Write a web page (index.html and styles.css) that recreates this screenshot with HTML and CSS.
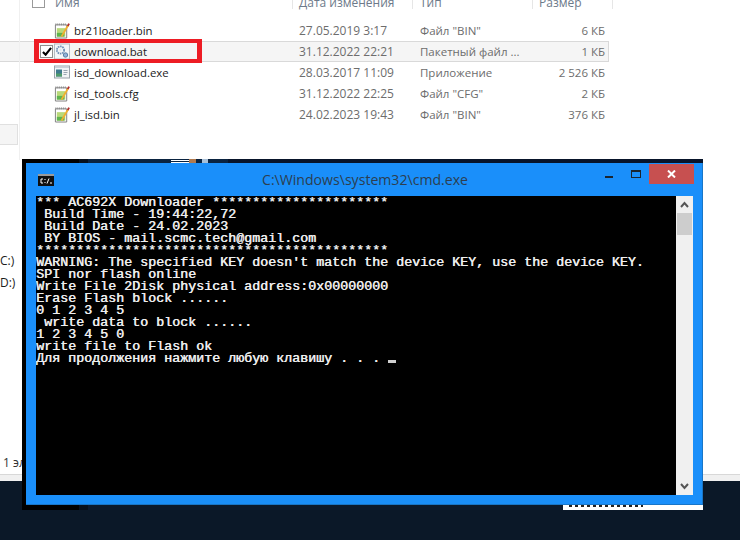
FILE: index.html
```html
<!DOCTYPE html>
<html lang="ru">
<head>
<meta charset="utf-8">
<title>cmd.exe</title>
<link rel="stylesheet" href="styles.css">
</head>
<body>
<svg class="defs" width="0" height="0" aria-hidden="true">
  <symbol id="ico-file" viewBox="0 0 17 17">
    <path d="M1.5 2.5h12v14h-12z" fill="#fff" stroke="#7d7d7d"/>
    <path d="M2 1v2M4 1v2M6 1v2M8 1v2M10 1v2M12 1v2" stroke="#8a8a8a"/>
    <rect x="3" y="6" width="9" height="9" fill="#b9d97a"/>
    <rect x="3" y="11" width="8" height="4" fill="#5fb34f"/>
    <path d="M8 15L15 3" stroke="#f0b030" stroke-width="2"/>
    <path d="M14.6 3.7L16 1.2" stroke="#b03030" stroke-width="2"/>
  </symbol>
  <symbol id="ico-bat" viewBox="0 0 16 16">
    <rect x=".5" y=".5" width="15" height="15" fill="#f4f6f8" stroke="#b4bcc4"/>
    <circle cx="6.5" cy="6.5" r="3.6" fill="none" stroke="#6f8fb5" stroke-width="1.8" stroke-dasharray="1.6 .7"/>
    <circle cx="6.5" cy="6.5" r="1.2" fill="#dfe8f2"/>
    <circle cx="11.5" cy="11.5" r="2.2" fill="#8fb2d8" stroke="#5d7fa6"/>
  </symbol>
  <symbol id="ico-exe" viewBox="0 0 16 16">
    <rect x=".5" y="1.5" width="15" height="12" fill="#f2f4f6" stroke="#9aa2aa"/>
    <rect x="1" y="2" width="14" height="1.5" fill="#c9d2da"/>
    <rect x="2" y="5" width="6" height="7" fill="#3f7a8e"/>
    <rect x="2" y="9" width="6" height="3" fill="#4f9a6a"/>
    <path d="M9.5 6h4M9.5 8h4M9.5 10h3" stroke="#9aa6b2"/>
  </symbol>
</svg>
<main class="desktop">
  <section class="explorer">
    <header class="columns">
      <span class="col-check"><span class="box"></span></span>
      <span class="col-name">Имя</span>
      <span class="col-date">Дата изменения</span>
      <span class="col-type">Тип</span>
      <span class="col-size">Размер</span>
    </header>
    <div class="files">
      <div class="row">
        <span class="col-check"></span>
        <svg class="file-icon"><use href="#ico-file"/></svg>
        <span class="col-fname">br21loader.bin</span>
        <span class="col-date">27.05.2019 3:17</span><span class="col-type">Файл "BIN"</span><span class="col-size">6 КБ</span>
      </div>
      <div class="row row-selected">
        <span class="col-check"><span class="box box-checked"><svg width="10" height="9" viewBox="0 0 11 10"><path d="M1 5.5L4 8.5L10 1" fill="none" stroke="#000" stroke-width="2.4"/></svg></span></span>
        <svg class="file-icon"><use href="#ico-bat"/></svg>
        <span class="col-fname">download.bat</span>
        <span class="col-date">31.12.2022 22:21</span><span class="col-type">Пакетный файл ...</span><span class="col-size">1 КБ</span>
      </div>
      <div class="row">
        <span class="col-check"></span>
        <svg class="file-icon"><use href="#ico-exe"/></svg>
        <span class="col-fname">isd_download.exe</span>
        <span class="col-date">28.03.2017 11:09</span><span class="col-type">Приложение</span><span class="col-size">2 526 КБ</span>
      </div>
      <div class="row">
        <span class="col-check"></span>
        <svg class="file-icon"><use href="#ico-file"/></svg>
        <span class="col-fname">isd_tools.cfg</span>
        <span class="col-date">31.12.2022 22:25</span><span class="col-type">Файл "CFG"</span><span class="col-size">2 КБ</span>
      </div>
      <div class="row">
        <span class="col-check"></span>
        <svg class="file-icon"><use href="#ico-file"/></svg>
        <span class="col-fname">jl_isd.bin</span>
        <span class="col-date">24.02.2023 19:43</span><span class="col-type">Файл "BIN"</span><span class="col-size">376 КБ</span>
      </div>
    </div>
    <div class="red-mark"></div>
    <aside class="nav-item"></aside>
    <div class="drive drive-c">C:)</div>
    <div class="drive drive-d">D:)</div>
    <div class="status">1 элемент</div>
    <div class="status-line"></div>
  </section>

  <section class="console">
    <div class="strip strip-top">
      <i class="s-black"></i><i class="s-dark"></i><i class="s-navy s-a"></i><i class="s-white"></i><i class="s-navy s-b"></i><i class="s-red"></i><i class="s-navy s-c"></i><i class="s-tan"></i><i class="s-navy s-d"></i>
    </div>
    <div class="console-mid">
      <div class="cmd">
        <div class="titlebar">
          <svg class="cmd-icon" width="16" height="12" viewBox="0 0 16 12"><rect width="16" height="12" fill="#111"/><rect y="0" width="16" height="2" fill="#9a9a9a"/><path d="M5 5H3v4h2M7 5v1M7 8v1M9 9.5l2-5M12 9h2" fill="none" stroke="#fff"/></svg>
          <span class="title">C:\Windows\system32\cmd.exe</span>
          <span class="btn-min"></span>
          <span class="btn-max"></span>
          <span class="btn-close"><svg width="9" height="8" viewBox="0 0 9 8"><path d="M1 .5L8 7.5M8 .5L1 7.5" stroke="#fff" stroke-width="2"/></svg></span>
        </div>
        <div class="cmd-body">
<pre class="terminal">*** AC692X Downloader **********************
 Build Time - 19:44:22,72
 Build Date - 24.02.2023
 BY BIOS - mail.scmc.tech@gmail.com
********************************************
WARNING: The specified KEY doesn't match the device KEY, use the device KEY.
SPI nor flash online
Write File 2Disk physical address:0x00000000
Erase Flash block ......
0 1 2 3 4 5
 write data to block ......
1 2 3 4 5 0
write file to Flash ok
Для продолжения нажмите любую клавишу . . . <span class="cursor"></span></pre>
          <div class="scrollbar">
            <svg class="arrow" width="9" height="7" viewBox="0 0 9 7"><path d="M1 6L4.5 2L8 6" fill="none" stroke="#555" stroke-width="2"/></svg>
            <div class="thumb"></div>
            <svg class="arrow arrow-down" width="9" height="7" viewBox="0 0 9 7"><path d="M1 1L4.5 5L8 1" fill="none" stroke="#555" stroke-width="2"/></svg>
          </div>
        </div>
      </div>
    </div>
    <div class="strip strip-bottom">
      <i class="s-black"></i><i class="s-dark"></i><i class="s-navy2"></i><i class="s-white2"><b class="w-gray"></b><b class="w-thumb"></b><b class="w-text"></b></i>
    </div>
  </section>
</main>
</body>
</html>
```
FILE: styles.css
```css
* { box-sizing: border-box; }
html, body { margin: 0; padding: 0; }
body { width: 740px; height: 540px; overflow: hidden; background: #0b1828; }
.defs { position: absolute; }

.desktop { position: relative; width: 740px; height: 540px; overflow: hidden; background: #0b1828; }

/* Explorer */
.explorer {
  position: relative;
  height: 481px;
  background: #fff;
  font: 12px/21px "Open Sans", "Noto Sans", sans-serif;
  color: #6d6d6d;
  overflow: hidden;
}
.columns {
  display: flex;
  height: 20px;
  padding-left: 32px;
  line-height: 12px;
  color: #6d7a8a;
  background:
    linear-gradient(#e6e6e6, #e6e6e6) 292px 0 / 1px 9px no-repeat,
    linear-gradient(#e6e6e6, #e6e6e6) 412px 0 / 1px 9px no-repeat,
    linear-gradient(#e6e6e6, #e6e6e6) 532px 0 / 1px 9px no-repeat,
    linear-gradient(#e6e6e6, #e6e6e6) 612px 0 / 1px 9px no-repeat;
}
.columns .col-check { width: 23px; margin-top: 0; }
.columns .box { display: block; width: 13px; height: 8px; margin-top: 0; border: 1px solid #9a9a9a; border-top: 0; }
.columns span { margin-top: -3px; }
.columns .col-name { width: 244px; }
.col-date { width: 121px; flex: none; }
.col-type { width: 120px; flex: none; }
.col-size { width: 65px; flex: none; }
.row .col-type, .row .col-size { font-size: 11.5px; }
.columns .col-type { width: 119px; }
.row .col-size { text-align: right; }

.row {
  display: flex;
  align-items: center;
  width: 609px;
  height: 21px;
  padding-left: 40px;
  border: 1px solid transparent;
  border-left: 0;
}
.row .col-check { width: 14px; flex: none; }
.row-selected { background: #f5f5f5; border-color: #d9d9d9; }
.file-icon { width: 16px; height: 17px; margin-right: 4px; flex: none; }
.col-fname { width: 225px; flex: none; color: #1c1c1c; font-size: 11.4px; }
.box { display: block; background: #fff; }
.box-checked { width: 13px; height: 13px; border: 1px solid #8f8f8f; display: flex; align-items: center; justify-content: center; }

.red-mark { position: absolute; left: 34px; top: 39px; width: 168px; height: 24px; border: solid #ed1c24; border-width: 4px 5px; }

.nav-item { position: absolute; left: 0; top: 124px; width: 18px; height: 21px; background: #f5f5f5; border: 1px solid #e0e0e0; border-left: 0; }
.explorer::before { content: ""; position: absolute; left: 19px; top: 0; width: 1px; height: 160px; background: #f0f0f0; }

.drive { position: absolute; left: 0; color: #1c1c1c; }
.drive-c { top: 250px; }
.drive-d { top: 272px; }
.status { position: absolute; left: 3px; top: 452px; color: #333; }
.status-line { position: absolute; left: 0; right: 0; top: 474px; height: 7px; background: #f0f0f0; border-top: 1px solid #d8d8d8; }

/* Console */
.console {
  position: absolute;
  left: 22px;
  top: 159px;
  width: 681px;
  height: 351px;
  display: flex;
  flex-direction: column;
}
.strip { display: flex; flex: none; }
.strip i { display: block; height: 100%; flex: none; }
.strip-top { height: 4px; background: #08142a; }
.strip-bottom { height: 5px; }
.s-black { width: 57px; background: #000; }
.s-dark { width: 9px; background: #07101c; }
.s-navy { background: #0a2340; }
.s-a { width: 83px; }
.s-white { width: 18px; background: linear-gradient(#0a2340 1px, #fff 1px, #fff 2px, #0a2340 2px, #0a2340 3px, #fff 3px); }
.s-b { width: 0; }
.s-red { width: 7px; background: #b07a50; }
.s-c { width: 6px; }
.s-tan { width: 6px; background: #a8c0d8; }
.s-d { width: 20px; }
.s-navy2 { flex: 1 1 auto !important; width: 475px; background: #0b1a2e; }
.s-white2 { width: 140px; background: #fff; display: flex; }
.s-white2 b { display: block; }
.w-gray { width: 8px; background: #ececec; }
.w-thumb { width: 16px; margin-left: 30px; background: #5c6c86; }
.w-text { width: 74px; height: 2px; margin-left: 6px; background: repeating-linear-gradient(90deg, #222 0 3px, #fff 3px 6px); }

.console-mid { flex: 1; display: flex; background: #000; padding-left: 4px; min-height: 0; }
.cmd {
  flex: 1;
  display: flex;
  flex-direction: column;
  background: #1a8ffa;
  border: 1px solid #1976c8;
  border-width: 0 1px 1px 0;
  padding: 0 9px 9px 10px;
  min-height: 0;
}
.titlebar { position: relative; display: flex; align-items: center; justify-content: center; height: 33px; flex: none; }
.cmd-icon { position: absolute; left: 2px; top: 11px; }
.title { font: 14.1px/1 "Open Sans", "Noto Sans", sans-serif; color: #2c3e50; margin-top: 2px; margin-left: 1px; }
.btn-min { position: absolute; left: 569px; top: 13px; width: 8px; height: 2px; background: #1a2530; }
.btn-max { position: absolute; left: 595px; top: 7px; width: 10px; height: 8px; border: 1px solid #1a2530; border-top-width: 2px; }
.btn-close { position: absolute; left: 613px; top: 1px; width: 45px; height: 20px; background: #c75050; display: flex; align-items: center; justify-content: center; }

.cmd-body { flex: 1; display: flex; min-height: 0; }
.terminal {
  flex: 1;
  margin: 0;
  padding-top: 1px;
  background: #000;
  color: #eeeeee;
  font: 13.33px/12px "Liberation Mono", "DejaVu Sans Mono", monospace;
  text-shadow: .5px 0 #eeeeee;
  overflow: hidden;
}
.cursor { display: inline-block; width: 8px; height: 3px; background: #d0d0d0; vertical-align: -1px; }
.scrollbar { width: 17px; flex: none; background: #f0f0f0; display: flex; flex-direction: column; align-items: center; padding-top: 5px; }
.thumb { width: 15px; height: 22px; margin-top: 5px; background: #cdcdcd; }
.arrow { flex: none; }
.arrow-down { margin-top: auto; margin-bottom: 5px; }
```
